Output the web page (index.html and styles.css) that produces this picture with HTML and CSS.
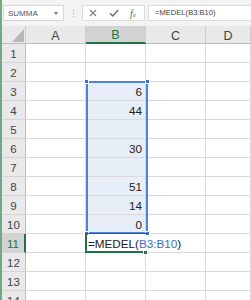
FILE: index.html
```html
<!DOCTYPE html>
<html lang="sv">

<head>
    <meta charset="UTF-8">
    <meta name="viewport" content="width=device-width, initial-scale=1.0">
    <title>Excel - MEDEL</title>
    <link rel="stylesheet" href="styles.css">
</head>

<body>
    <div class="window">
        <!-- Namnruta och formelfält -->
        <div class="toolbar">
            <div class="name-box">
                <span>SUMMA</span>
                <span class="arrow"></span>
            </div>
            <div class="grip"><i></i><i></i><i></i></div>
            <div class="fx-buttons">
                <svg class="icon" width="8" height="8" viewBox="0 0 8 8">
                    <path d="M1 1 L7 7 M7 1 L1 7" stroke="#7a7a7a" stroke-width="1.1" fill="none" />
                </svg>
                <svg class="icon" width="10" height="8" viewBox="0 0 10 8">
                    <path d="M1 4.2 L3.8 7 L9 1" stroke="#6e6e6e" stroke-width="1.4" fill="none" />
                </svg>
                <span class="fx">f<small>x</small></span>
            </div>
            <div class="formula-input">=MEDEL(B3:B10)</div>
        </div>

        <!-- Kalkylblad -->
        <div class="sheet">
            <div class="corner"><span class="triangle"></span></div>
            <div class="col-head">A</div>
            <div class="col-head active">B</div>
            <div class="col-head">C</div>
            <div class="col-head">D</div>

            <div class="row-head">1</div><div class="cell"></div><div class="cell"></div><div class="cell"></div><div class="cell"></div>
            <div class="row-head">2</div><div class="cell"></div><div class="cell"></div><div class="cell"></div><div class="cell"></div>
            <div class="row-head">3</div><div class="cell"></div><div class="cell sel">6</div><div class="cell"></div><div class="cell"></div>
            <div class="row-head">4</div><div class="cell"></div><div class="cell sel">44</div><div class="cell"></div><div class="cell"></div>
            <div class="row-head">5</div><div class="cell"></div><div class="cell sel"></div><div class="cell"></div><div class="cell"></div>
            <div class="row-head">6</div><div class="cell"></div><div class="cell sel">30</div><div class="cell"></div><div class="cell"></div>
            <div class="row-head">7</div><div class="cell"></div><div class="cell sel"></div><div class="cell"></div><div class="cell"></div>
            <div class="row-head">8</div><div class="cell"></div><div class="cell sel">51</div><div class="cell"></div><div class="cell"></div>
            <div class="row-head">9</div><div class="cell"></div><div class="cell sel">14</div><div class="cell"></div><div class="cell"></div>
            <div class="row-head">10</div><div class="cell"></div><div class="cell sel">0</div><div class="cell"></div><div class="cell"></div>
            <div class="row-head active">11</div><div class="cell"></div><div class="cell edit">=MEDEL(<span class="ref">B3:B10</span>)<span class="handle"></span></div><div class="cell"></div><div class="cell"></div>
            <div class="row-head">12</div><div class="cell"></div><div class="cell"></div><div class="cell"></div><div class="cell"></div>
            <div class="row-head">13</div><div class="cell"></div><div class="cell"></div><div class="cell"></div><div class="cell"></div>
            <div class="row-head">14</div><div class="cell"></div><div class="cell"></div><div class="cell"></div><div class="cell"></div>

            <!-- markering av referensen B3:B10 -->
            <div class="range">
                <span class="dot tl"></span><span class="dot tr"></span>
                <span class="dot bl"></span><span class="dot br"></span>
            </div>
        </div>
    </div>
</body>

</html>
```

FILE: styles.css
```css
* {
    box-sizing: border-box;
}

body {
    margin: 0;
    overflow: hidden;
    font-family: "Liberation Sans", Arial, sans-serif;
    background-color: white;
}

.window {
    border-left: 2px solid #72a886;
    height: 300px;
}

.toolbar {
    height: 26px;
    background-color: #f3f3f3;
    display: flex;
    align-items: flex-start;
    padding-top: 5px;
}

.name-box {
    margin-left: 1px;
    width: 61px;
    height: 16px;
    background-color: white;
    border: 1px solid #d6d6d6;
    display: flex;
    align-items: center;
    justify-content: space-between;
    padding: 0 5px 0 4px;
    font-size: 8px;
    color: #555;
}

.arrow {
    width: 0;
    height: 0;
    border-left: 2.5px solid transparent;
    border-right: 2.5px solid transparent;
    border-top: 3px solid #777;
}

.grip {
    width: 18px;
    height: 16px;
    display: flex;
    flex-direction: column;
    align-items: center;
    justify-content: center;
    gap: 2px;
}

.grip i {
    width: 1px;
    height: 1px;
    background-color: #a8a8a8;
}

.fx-buttons {
    width: 63px;
    height: 16px;
    background-color: white;
    border: 1px solid #dcdcdc;
    display: flex;
    align-items: center;
    padding-left: 6px;
    gap: 12px;
}

.fx {
    font-family: "Liberation Serif", serif;
    font-style: italic;
    font-size: 10px;
    color: #666;
    margin-left: -1px;
}

.fx small {
    font-size: 7px;
}

.formula-input {
    margin-left: 3px;
    flex: 1;
    height: 16px;
    background-color: white;
    border: 1px solid #dcdcdc;
    border-right: none;
    font-size: 7.6px;
    color: #444;
    padding-left: 6px;
    line-height: 14px;
}

.sheet {
    position: relative;
    display: grid;
    grid-template-columns: 24px 60px 60px 60px 1fr;
    grid-template-rows: 18px;
    grid-auto-rows: 19px;
    font-size: 11.7px;
    color: #222;
}

.corner,
.col-head,
.row-head {
    background-color: #e9e9e9;
    color: #444;
    border-right: 1px solid #cdcdcd;
    border-bottom: 1px solid #bdbdbd;
    display: flex;
    align-items: center;
    justify-content: center;
}

.corner {
    position: relative;
}

.triangle {
    position: absolute;
    right: 1px;
    bottom: 1px;
    width: 0;
    height: 0;
    border-left: 12px solid transparent;
    border-bottom: 13px solid #b8b8b8;
}

.col-head {
    font-size: 12.5px;
    padding-top: 2px;
}

.row-head {
    font-size: 11.5px;
    border-bottom-color: #d4d4d4;
    border-right-color: #bdbdbd;
    padding-top: 1px;
}

.col-head.active {
    background-color: #d3d3d3;
    color: #217346;
    border-bottom: 2px solid #217346;
}

.row-head.active {
    background-color: #d3d3d3;
    color: #217346;
    border-right: 2px solid #217346;
}

.cell {
    border-right: 1px solid #dadada;
    border-bottom: 1px solid #dadada;
    text-align: right;
    padding: 3px 3px 0 0;
    line-height: 14px;
}

.sel {
    background-color: #e8eef8;
}

.edit {
    position: relative;
    text-align: left;
    white-space: nowrap;
    padding-left: 2px;
    border-right: none;
    z-index: 2;
}

.edit::before {
    content: "";
    position: absolute;
    left: -1px;
    top: -1px;
    width: 61px;
    bottom: -1px;
    border: 2px solid #217346;
    border-right: none;
    border-top-width: 1px;
}

.ref {
    color: #3b6fc9;
}

.handle {
    position: absolute;
    right: -2px;
    bottom: -3px;
    width: 5px;
    height: 5px;
    background-color: #217346;
    border: 1px solid white;
}

.range {
    position: absolute;
    left: 84px;
    top: 55px;
    width: 62px;
    height: 153px;
    border: 2px solid #5282d4;
    pointer-events: none;
}

.dot {
    position: absolute;
    width: 5px;
    height: 5px;
    background-color: #3b6fc9;
    border: 1px solid white;
}

.tl { left: -4px; top: -4px; }
.tr { right: -4px; top: -4px; }
.bl { left: -4px; bottom: -4px; }
.br { right: -4px; bottom: -4px; }
```
